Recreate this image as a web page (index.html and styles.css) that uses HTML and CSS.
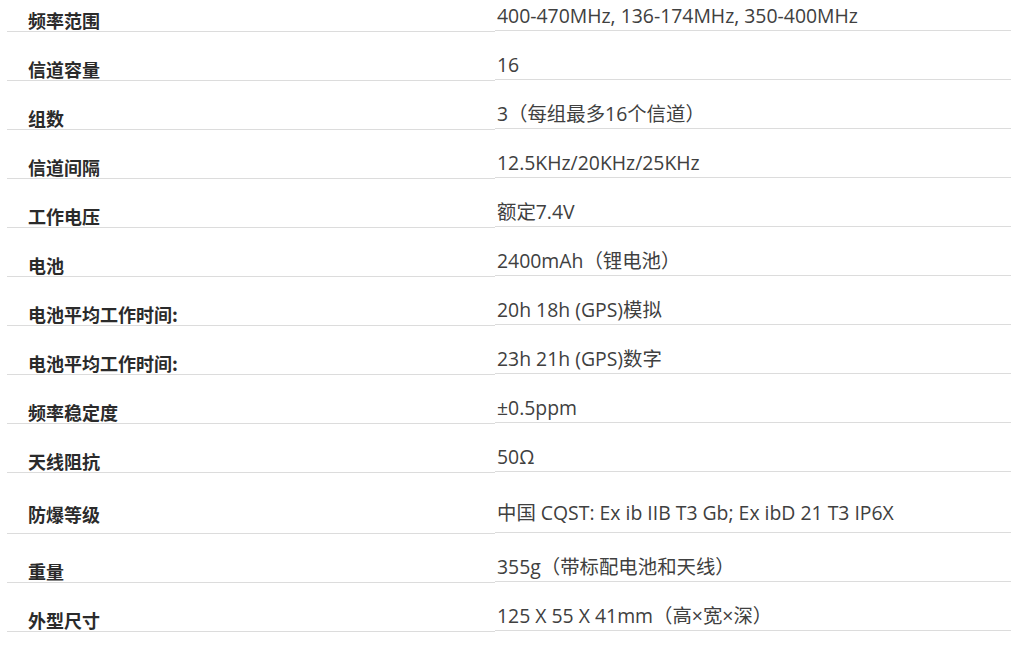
FILE: index.html
```html
<!DOCTYPE html>
<html lang="zh-CN">
<head>
<meta charset="utf-8">
<title>规格参数</title>
<link rel="stylesheet" href="styles.css">
</head>
<body>
<div class="specs">
  <div class="row"><div class="label">频率范围</div><div class="value">400-470MHz, 136-174MHz, 350-400MHz</div></div>
  <div class="row"><div class="label">信道容量</div><div class="value">16</div></div>
  <div class="row"><div class="label">组数</div><div class="value">3（每组最多16个信道）</div></div>
  <div class="row"><div class="label">信道间隔</div><div class="value">12.5KHz/20KHz/25KHz</div></div>
  <div class="row"><div class="label">工作电压</div><div class="value">额定7.4V</div></div>
  <div class="row"><div class="label">电池</div><div class="value">2400mAh（锂电池）</div></div>
  <div class="row"><div class="label">电池平均工作时间:</div><div class="value">20h 18h (GPS)模拟</div></div>
  <div class="row"><div class="label">电池平均工作时间:</div><div class="value">23h 21h (GPS)数字</div></div>
  <div class="row"><div class="label">频率稳定度</div><div class="value">±0.5ppm</div></div>
  <div class="row"><div class="label">天线阻抗</div><div class="value">50Ω</div></div>
  <div class="row row-tall"><div class="label">防爆等级</div><div class="value">中国 CQST: Ex ib IIB T3 Gb; Ex ibD 21 T3 IP6X</div></div>
  <div class="row"><div class="label">重量</div><div class="value">355g（带标配电池和天线）</div></div>
  <div class="row"><div class="label">外型尺寸</div><div class="value">125 X 55 X 41mm（高×宽×深）</div></div>
</div>
</body>
</html>
```

FILE: styles.css
```css
html, body {
  margin: 0;
  padding: 0;
  background: #ffffff;
}

.specs {
  margin-top: -17px;
  padding-left: 7px;
  width: 1004px;
  color: #333333;
}

.row {
  display: grid;
  grid-template-columns: 488px 516px;
  align-items: start;
}

.label {
  box-sizing: border-box;
  height: 49px;
  display: flex;
  align-items: flex-end;
  padding: 0 0 1px 21px;
  border-bottom: 1px solid #dcdcdc;
  font-family: "Noto Sans CJK SC", sans-serif;
  font-weight: 700;
  font-size: 18px;
  line-height: 20px;
  color: #2b2b2b;
}

.value {
  box-sizing: border-box;
  height: 48px;
  display: flex;
  align-items: flex-end;
  padding: 0 0 1px 2px;
  border-bottom: 1px solid #dcdcdc;
  font-family: "Open Sans", "Noto Sans CJK SC", sans-serif;
  font-size: 19.4px;
  line-height: 26px;
  color: #404040;
}

.row-tall .label {
  height: 61px;
  padding-bottom: 9px;
}

.row-tall .value {
  height: 60px;
  padding-bottom: 6px;
}
```
